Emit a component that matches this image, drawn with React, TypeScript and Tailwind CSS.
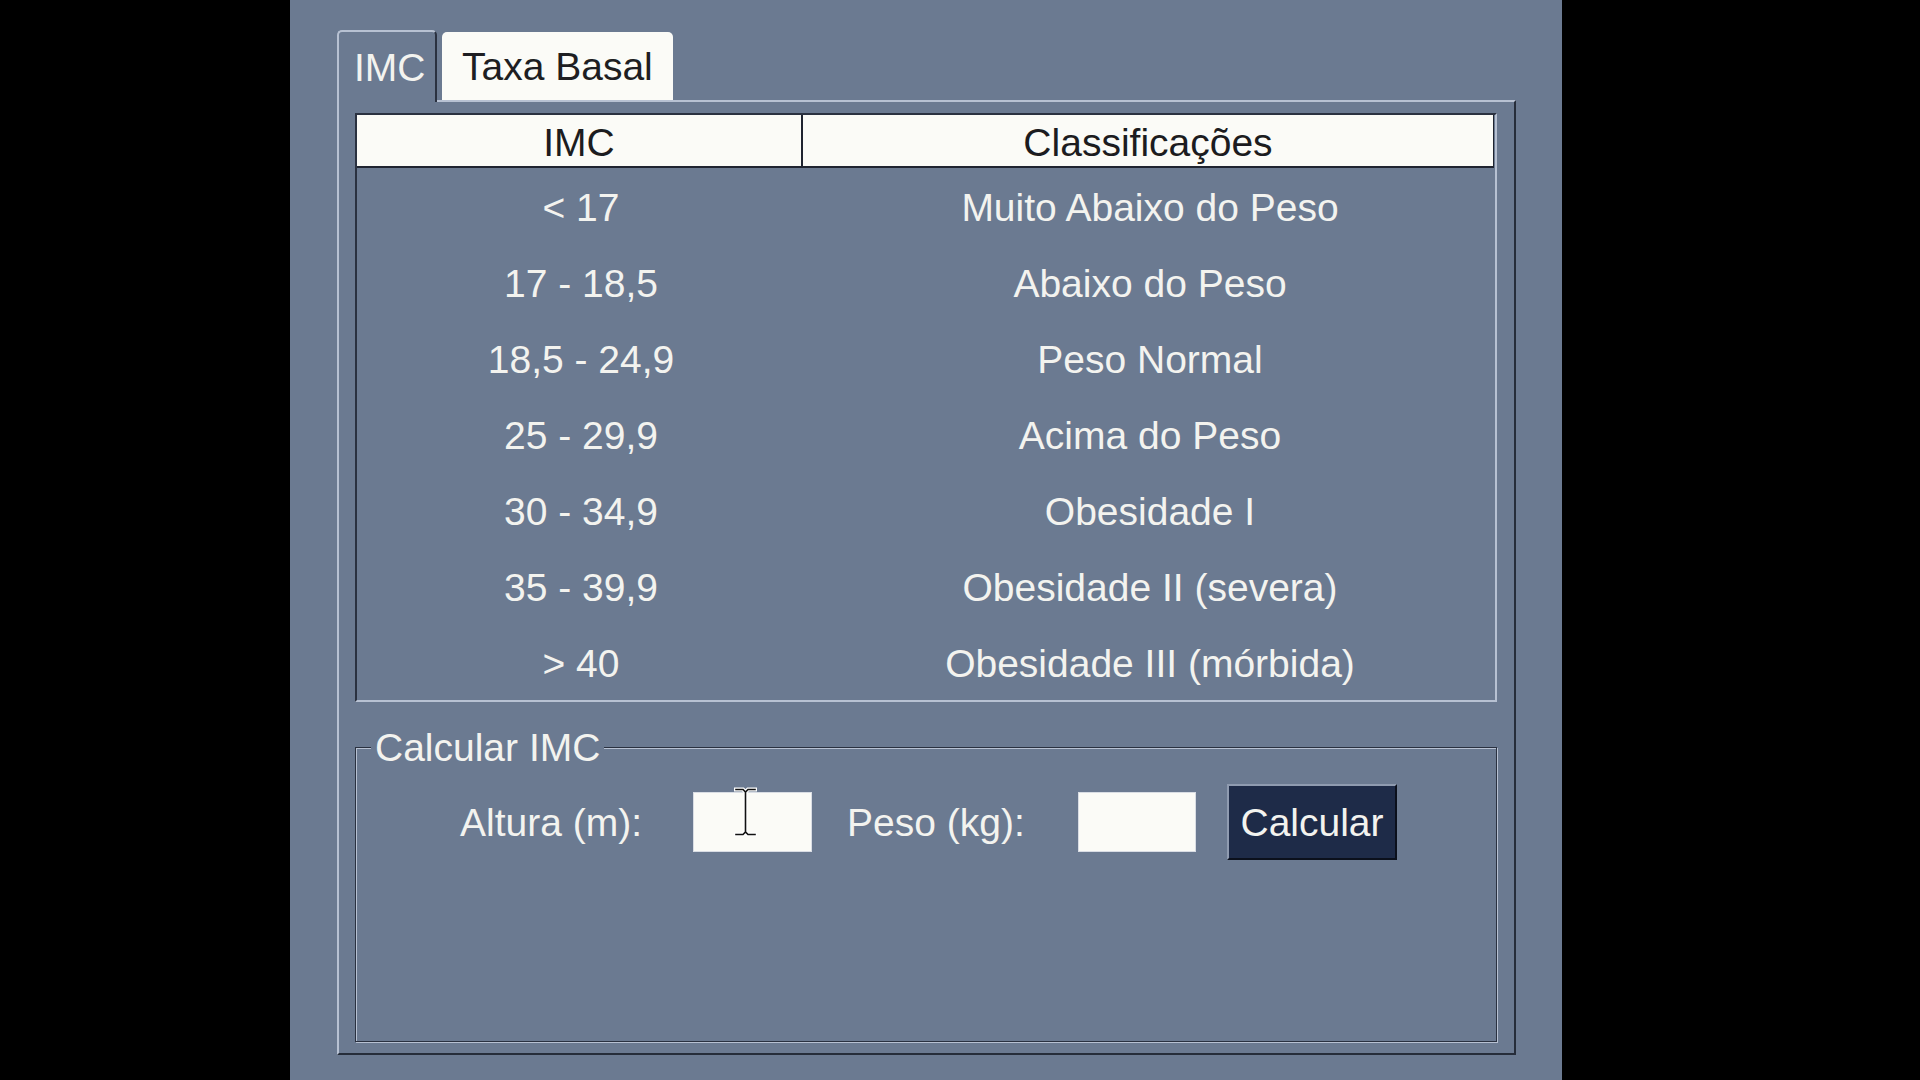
import React from "react";

const rows: [string, string][] = [
  ["< 17", "Muito Abaixo do Peso"],
  ["17 - 18,5", "Abaixo do Peso"],
  ["18,5 - 24,9", "Peso Normal"],
  ["25 - 29,9", "Acima do Peso"],
  ["30 - 34,9", "Obesidade I"],
  ["35 - 39,9", "Obesidade II (severa)"],
  ["> 40", "Obesidade III (mórbida)"],
];

function IBeam() {
  return (
    <svg
      width="25"
      height="50"
      viewBox="0 0 25 50"
      className="pointer-events-none absolute left-[40px] top-[-5px]"
    >
      <g fill="none" strokeLinecap="square">
        <path
          d="M3 2.5 H10 L12.5 5 L15 2.5 H22 M12.5 5 V45 M3 47.5 H10 L12.5 45 L15 47.5 H22"
          stroke="#ffffff"
          strokeWidth="4"
        />
        <path
          d="M3 2.5 H10 L12.5 5 L15 2.5 H22 M12.5 5 V45 M3 47.5 H10 L12.5 45 L15 47.5 H22"
          stroke="#111111"
          strokeWidth="1.6"
        />
      </g>
    </svg>
  );
}

export default function App() {
  return (
    <div className="flex h-[1080px] w-[1920px] overflow-hidden bg-black font-['Liberation_Sans',Arial,sans-serif] text-[39px] leading-none">
      <div className="ml-[290px] h-full w-[1272px] bg-[#6b7a91] pl-[47px] pt-[30px]">
        {/* tabs */}
        <div className="flex h-[70px] items-end gap-[5px]">
          <div className="relative z-10 -mb-[2px] flex h-[72px] w-[100px] items-center rounded-t-[5px] border-l-2 border-r-2 border-t-2 border-l-[#b7c1d2] border-r-[#2a3140] border-t-[#b7c1d2] bg-[#6b7a91] pl-[15px] text-[#f3f3ef]">
            IMC
          </div>
          <div className="flex h-[68px] w-[231px] items-center rounded-t-[5px] bg-[#fbfbf7] pl-[20px] text-[#1e1e22]">
            Taxa Basal
          </div>
        </div>

        {/* tab page */}
        <div className="h-[955px] w-[1179px] border-2 border-b-[#262d3a] border-l-[#b7c1d2] border-r-[#262d3a] border-t-[#b7c1d2] pl-[16px] pt-[11px]">
          {/* table */}
          <div className="w-[1142px] border-2 border-b-[#b7c1d2] border-l-[#2a3140] border-r-[#b7c1d2] border-t-[#2a3140]">
            <div className="mr-[1px] flex h-[53px] border-b-2 border-r border-[#1f2430] bg-[#fbfbf7] text-[#1c1c20]">
              <div className="flex w-[446px] items-center justify-center border-r-2 border-[#1f2430] pt-[4px]">
                IMC
              </div>
              <div className="flex flex-1 items-center justify-center pt-[4px]">Classificações</div>
            </div>
            {rows.map(([imc, cls]) => (
              <div key={imc} className="grid h-[76px] grid-cols-[448px_1fr] pt-[3px] text-[#f3f3ef]">
                <div className="flex items-center justify-center">{imc}</div>
                <div className="flex items-center justify-center">{cls}</div>
              </div>
            ))}
          </div>

          {/* group box */}
          <fieldset className="mt-[26px] h-[314px] w-[1142px] border border-[#2a3140] shadow-[inset_1px_1px_0_#b7c1d2,1px_1px_0_#b7c1d2]">
            <legend className="ml-[15px] bg-[#6b7a91] px-[4px] leading-none text-[#f3f3ef]">
              Calcular IMC
            </legend>
            <div className="mt-[17px] flex h-[76px] items-center pl-[104px] text-[#f3f3ef]">
              <div className="w-[233px]">Altura (m):</div>
              <div className="relative">
                <input
                  type="text"
                  readOnly
                  className="block h-[60px] w-[119px] border border-[#d9dde4] bg-[#fbfbf7] outline-none"
                />
                <IBeam />
              </div>
              <div className="w-[266px] pl-[35px]">Peso (kg):</div>
              <input
                type="text"
                readOnly
                className="block h-[60px] w-[118px] border border-[#d9dde4] bg-[#fbfbf7] outline-none"
              />
              <button className="ml-[31px] flex h-[76px] w-[170px] items-center justify-center border-2 border-b-[#0b101c] border-l-[#8f9bb0] border-r-[#0b101c] border-t-[#8f9bb0] bg-[#1e2b48] text-[#f3f3ef]">
                Calcular
              </button>
            </div>
          </fieldset>
        </div>
      </div>
    </div>
  );
}
